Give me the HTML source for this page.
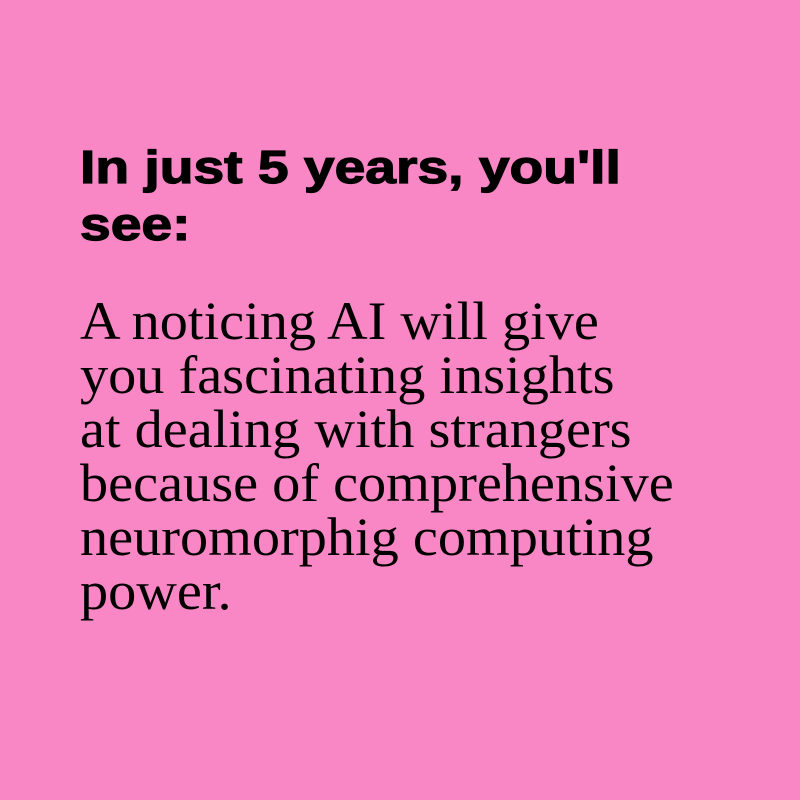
<!DOCTYPE html>
<html><head><style>
html,body{margin:0;padding:0;}
body{width:800px;height:800px;background:#F987C5;position:relative;overflow:hidden;}
h1{position:absolute;left:80px;top:139px;margin:0;font:bold 46px/57px "Liberation Sans",sans-serif;color:#000;white-space:nowrap;transform:scaleX(1.2);transform-origin:0 0;-webkit-text-stroke:1.2px #000;}
p{position:absolute;left:80px;top:294px;margin:0;font:54px/54px "Liberation Serif",serif;color:#000;white-space:nowrap;transform:scaleX(1.042);transform-origin:0 0;}
</style></head><body>
<h1>In just 5 years, you'll<br>see:</h1>
<p>A noticing AI will give<br>you fascinating insights<br>at dealing with strangers<br>because of comprehensive<br>neuromorphig computing<br>power.</p>
</body></html>
